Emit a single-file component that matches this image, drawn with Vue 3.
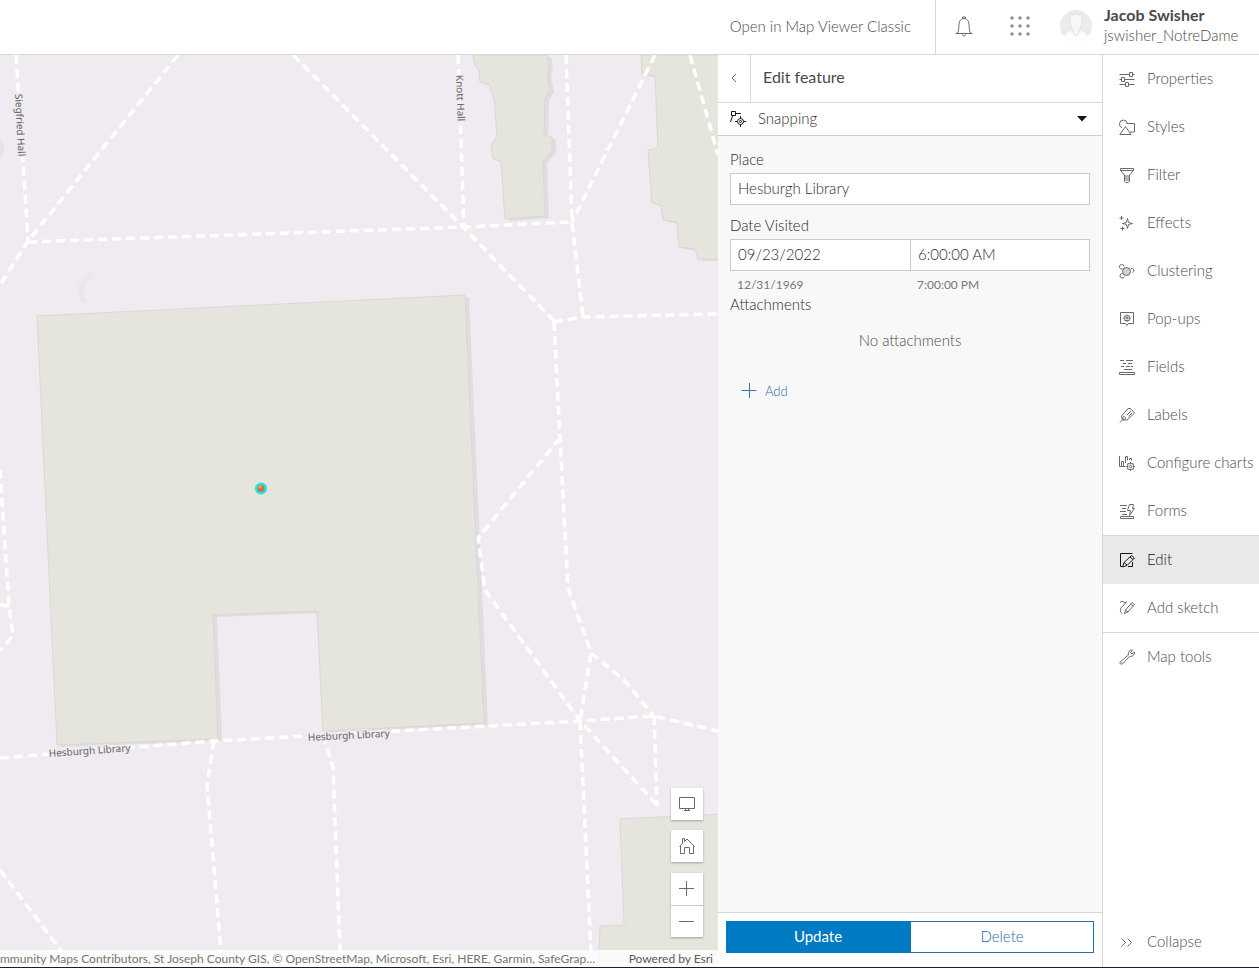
<script setup>
import { ref } from 'vue'

const place = ref('Hesburgh Library')
const date = ref('09/23/2022')
const time = ref('6:00:00 AM')

const icons = {
  properties:
    'M.5 3.500h10M13.500 3.500h2M10.500 1.500h3v4h-3zM.5 8.500h2M5.500 8.500h10M2.500 6.500h3v4h-3zM.5 13.500h6M9.500 13.500h6M6.500 11.500h3v4h-3z',
  styles: 'M6.500 7.500 12 15.500H.8zM3 8.800A4 4 0 1 1 8.400 4.500M7.500 4.500h8v8.500h-4.500',
  filter: 'M1.500 1.500h13v2l-4 4.500v6.500l-1 1h-3l-1-1V8l-4-4.500zM1.500 3.500h13M7 8v6M9 8v6',
  effects: 'M8.500 3.500 9.500 7.500 13.500 8.500 9.500 9.500 8.500 13.500 7.500 9.500 3.500 8.500 7.500 7.500zM2.500 1v4M.5 3h4M3.500 11.500v4M1.500 13.500h4',
  clustering: 'M3.500 6A2.300 2.300 0 1 1 5 3.500M12 5.500A2 2 0 1 1 13.500 9.500M3.500 10.500A2.300 2.300 0 1 0 5.500 13.500',
  popups:
    'M1.500 1.500h13v11h-5l-1.500 2-1.500-2h-5zM8 3.500v1.500M8 9.500V11M4 7.200h1.500M10.500 7.200H12M5.700 4.900h4.600v4.600H5.700zM8 6.300a.9.9 0 1 0 .1 0',
  fields: 'M1 1.500h4M7 1.500h7M4 4.500h3M9 4.500h4M2 7.500h3M7 7.500h4M5 10.500h8M12 7.500h2M.5 13.500h15v2H.5z',
  labels: 'M2.500 9 9 1.500 11.500 1.500 15.500 6 8 13H3.500zM1 15.500 4.500 11.500M5 9.500a1.500 1.500 0 1 0 .1 0M8 8l4-4M9.500 9.500 13 6',
  charts:
    'M.5 1v10.500h6M2.500 6.500h2v5h-2zM6.500 8V1.500h2v4M10.500 5V3.500h2v2M11.500 7v1.500M11.500 14.500V16M7 11.500h1.500M14.500 11.500H16M8.700 8.700h5.600v5.600H8.700zM11.500 10.300a1.200 1.200 0 1 0 .1 0',
  forms: 'M1 2.500h7M3 5.500h4M1 8.500h6M3 11.500h5M1.500 13.500h13v2h-13zM10.500 1.500h4l-1 4h2l-5 7 1-5h-3z',
  edit: 'M13.500 1.500H1.500v13h2M13.500 10v4.500H9M3.500 15 5 10.500 12.500 3.500 15.500 6 8 13.500zM5 10.500 8 13M11 5l3 2.500',
  sketch: 'M1 2.500 3 1l2 1.500L7.500 2 4 6C2 7 1 9 1.500 11.500L3 13.500M5.500 13.500 6.500 10 13 2.500 15.500 4.500 9 12zM6.500 10 9 12M11.500 4l2.500 2',
  tools: 'M1.500 12.500 9.500 6C8.500 3 11 .5 13.500 1L11.500 3.500 13 5 15.500 3C16 6 13 8 10.500 7.500L4 14.500C2 16 0 14.500 1.500 12.500zM2.500 13.500h1',
}

const layerItems = [
  ['properties', 'Properties'],
  ['styles', 'Styles'],
  ['filter', 'Filter'],
  ['effects', 'Effects'],
  ['clustering', 'Clustering'],
  ['popups', 'Pop-ups'],
  ['fields', 'Fields'],
  ['labels', 'Labels'],
  ['charts', 'Configure charts'],
  ['forms', 'Forms'],
]
const editItems = [
  ['edit', 'Edit'],
  ['sketch', 'Add sketch'],
]
const toolItems = [['tools', 'Map tools']]
const groups = [layerItems, editItems, toolItems]

const paths = [
  'M16 55 28 240',
  'M178 55 28 241 0 285',
  'M28 242 464 227 572 222',
  'M293 55 464 228 554 321',
  'M458 55 464 227',
  'M566 55 572 222 583 317',
  'M655 55 572 222',
  'M690 55 718 155',
  'M554 322 583 317 718 314',
  'M554 322 560 438 568 588 591 653 580 721',
  'M560 438 478 538 485 590 580 721 658 806',
  'M591 653 624 680 654 716',
  'M654 716 657 806',
  'M0 758 213 741 580 721 654 716 718 731',
  'M580 721 591 952',
  'M214 741 207 785 221 952',
  'M323 735 333 767 340 952',
  'M0 870 62 952',
  'M0 470 9 606 13 635 0 651',
  'M0 605 9 606',
]
const buildings = [
  'M37 316 465 295 484 723 323 731 317 611 213 615 218 739 57 745z',
  'M473 55 475 66 479 70 480 82 489 84 494 99 497 136 491 145 493 159 501 161 505 219 545 216 543 161 552 151 552 137 544 135 545 98 550 90 547 75 549 65 547 55z',
  'M641 55 642 74 655 76 658 148 648 150 652 203 661 205 663 220 677 222 679 247 695 249 698 259 725 259 725 55z',
  'M620 819 725 814 725 960 599 960 600 926 624 925z',
]
</script>

<template>
  <div class="app">
    <header class="top">
      <a class="classic" href="#">Open in Map Viewer Classic</a>
      <div class="account">
        <button class="plain" aria-label="Notifications">
          <svg width="20" height="24" viewBox="0 0 20 24" class="line">
            <path d="M1.500 19.500h17M3 19.500c2-2 1.500-5 2-9C5.500 6.500 7 4.500 10 4.500s4.500 2 5 6c.5 4 0 7 2 9M8.500 4.500v-1.500h3v1.500M8.500 20.500a1.500 1.500 0 0 0 3 0" />
          </svg>
        </button>
        <button class="plain" aria-label="Apps">
          <svg width="20" height="20" viewBox="0 0 20 20" class="line">
            <template v-for="y in 3" :key="y">
              <circle v-for="x in 3" :key="x" :cx="x * 8 - 6" :cy="y * 8 - 6" r="1.200" />
            </template>
          </svg>
        </button>
        <button class="user">
          <svg width="32" height="32" viewBox="0 0 32 32">
            <circle cx="16" cy="16" r="16" fill="#ebebeb" />
            <path d="M4 27c1-3 4-5 8-6l4 5 4-5c4 1 7 3 8 6-3 3-7 5-12 5S7 30 4 27z" fill="#fdfdfd" />
            <path d="M10 9c1-7 11-7 12 0 0 5-1 8-3 11v3l-3 3-3-3v-3c-2-3-3-6-3-11z" fill="#f7f7f7" stroke="#e2e2e2" />
          </svg>
          <span class="names"><strong>Jacob Swisher</strong><span>jswisher_NotreDame</span></span>
        </button>
      </div>
    </header>

    <main class="body">
      <section class="map" aria-label="Map">
        <svg class="canvas" viewBox="0 55 718 912" preserveAspectRatio="xMinYMin slice">
          <g fill="none" stroke="#e6e2e9" stroke-linecap="round">
            <path d="M90 275Q76 286 84 300" stroke-width="6" opacity=".6" />
            <ellipse cx="0" cy="149" rx="2" ry="6" stroke-width="4" />
          </g>
          <g fill="#e0dce0" transform="translate(4 2)"><path v-for="b in buildings" :key="b" :d="b" /></g>
          <g fill="#e5e4dd" stroke="#dad8d5"><path v-for="b in buildings" :key="b" :d="b" /></g>
          <g class="walks"><path v-for="p in paths" :key="p" :d="p" /></g>
          <g class="names-on-map">
            <text transform="translate(15 94) rotate(87)">Siegfried Hall</text>
            <text transform="translate(456 75) rotate(88)">Knott Hall</text>
            <text transform="translate(49 757) rotate(-4)">Hesburgh Library</text>
            <text transform="translate(308 741) rotate(-3)">Hesburgh Library</text>
          </g>
          <circle cx="261" cy="488.500" r="4.800" fill="#d9713a" stroke="#1fe5e5" stroke-width="2.500" />
          <circle cx="260" cy="487" r="1.500" fill="#f5a878" />
        </svg>
        <div class="controls">
          <button aria-label="Full view">
            <svg width="16" height="16" viewBox="0 0 16 16" class="line"><path d="M.5 1.500h15v11H.5zM6.500 12.500v2M9.500 12.500v2M5 14.500h6" /></svg>
          </button>
          <button aria-label="Default map view">
            <svg width="16" height="16" viewBox="0 0 16 16" class="line"><path d="M.5 8.500 3.500 5.500V.5h2v3L8 1l7.500 7.500M1.500 8v7.500h4v-6h5v6h4V8" /></svg>
          </button>
          <div class="zoom">
            <button aria-label="Zoom in">
              <svg width="16" height="16" viewBox="0 0 16 16" class="line"><path d="M0 7.500h15M7.500 0v15" /></svg>
            </button>
            <button aria-label="Zoom out">
              <svg width="16" height="16" viewBox="0 0 16 16" class="line"><path d="M0 7.500h15" /></svg>
            </button>
          </div>
        </div>
        <div class="credits">
          <span>mmunity Maps Contributors, St Joseph County GIS, © OpenStreetMap, Microsoft, Esri, HERE, Garmin, SafeGrap…</span>
          <span>Powered by Esri</span>
        </div>
      </section>

      <section class="panel">
        <div class="panel-head">
          <button class="back" aria-label="Back">
            <svg width="8" height="10" viewBox="0 0 8 10" class="line"><path d="M6 1 2 5l4 4" /></svg>
          </button>
          <h2>Edit feature</h2>
        </div>
        <button class="snap">
          <svg width="16" height="16" viewBox="0 0 16 16" fill="none" stroke="#151515">
            <path d="M1.500.5h4v4h-4zM6 2.500h5M2.500 5 .5 11M10.500 5v2.500M10.500 13.500v2.500M5 10.500h2.500M13.500 10.500h2.500" />
            <circle cx="10.500" cy="10.500" r="3" />
            <circle cx="10.500" cy="10.500" r="1" />
          </svg>
          <span class="text">Snapping</span>
          <svg width="10" height="6" viewBox="0 0 10 6"><path d="M0 0h10L5 5.500z" fill="#151515" /></svg>
        </button>
        <form class="fields" @submit.prevent>
          <label for="place">Place</label>
          <input id="place" v-model="place" type="text" />
          <label for="date">Date Visited</label>
          <div class="pair">
            <input id="date" v-model="date" type="text" />
            <input v-model="time" type="text" aria-label="Time visited" />
          </div>
          <div class="pair hint"><span>12/31/1969</span><span>7:00:00 PM</span></div>
          <h3>Attachments</h3>
          <p>No attachments</p>
          <button class="add" type="button">
            <svg width="16" height="16" viewBox="0 0 16 16" fill="none" stroke="#3a79ae"><path d="M.5 7.500h15M8.500 0v15" /></svg>
            Add
          </button>
        </form>
        <div class="actions">
          <button class="update">Update</button>
          <button class="delete">Delete</button>
        </div>
      </section>

      <nav class="side" aria-label="Settings">
        <ul v-for="(group, g) in groups" :key="g">
          <li v-for="[icon, label] in group" :key="icon">
            <button :class="{ on: icon === 'edit' }">
              <svg width="16" height="16" viewBox="0 0 16 16" class="line">
                <circle v-if="icon === 'clustering'" cx="7.500" cy="8.500" r="4" fill="#d0d0d0" />
                <path :d="icons[icon]" />
              </svg>
              <span class="text">{{ label }}</span>
            </button>
          </li>
        </ul>
        <button class="collapse">
          <svg width="16" height="16" viewBox="0 0 16 16" class="line"><path d="M2.500 4.500l4 4-4 4M8.500 4.500l4 4-4 4" /></svg>
          <span class="text">Collapse</span>
        </button>
      </nav>
    </main>
  </div>
</template>

<style>
body {
  margin: 0;
}
</style>

<style scoped>
.app {
  display: flex;
  flex-direction: column;
  height: 100vh;
  box-sizing: border-box;
  border-bottom: 1px solid #14202b;
  background: #fff;
  color: #4c4c4c;
  font: 300 15px/20px Lato, "Open Sans", sans-serif;
}
button,
input {
  box-sizing: border-box;
  margin: 0;
  padding: 0;
  border: 0;
  border-radius: 0;
  background: none;
  color: inherit;
  font: inherit;
}
svg {
  flex: none;
}
.line {
  fill: none;
  stroke: #6a6a6a;
}
.text {
  padding-bottom: 2px;
}
.top {
  display: flex;
  justify-content: flex-end;
  flex: none;
  height: 54px;
  border-bottom: 1px solid #d8d8d8;
}
.classic {
  display: flex;
  align-items: center;
  padding: 0 24px 2px 0;
  color: inherit;
  text-decoration: none;
}
.account {
  display: flex;
  width: 324px;
  padding-bottom: 2px;
  box-sizing: border-box;
  border-left: 1px solid #d8d8d8;
}
.plain {
  display: flex;
  align-items: center;
  justify-content: center;
  width: 56px;
}
.user {
  display: flex;
  align-items: center;
  gap: 12px;
  margin-left: 12px;
  text-align: left;
}
.names {
  display: flex;
  flex-direction: column;
  padding-bottom: 3px;
  line-height: 21px;
}
.names strong {
  color: #4a4a4a;
  font-size: 16px;
  font-weight: 700;
}
.body {
  display: flex;
  flex: 1;
  min-height: 0;
}
.map {
  position: relative;
  display: flex;
  flex-direction: column;
  justify-content: flex-end;
  flex: 1;
  min-width: 0;
  overflow: hidden;
  background: #efebf1;
}
.canvas {
  position: absolute;
  inset: 0;
  width: 100%;
  height: 100%;
}
.walks {
  fill: none;
  stroke: #fffffb;
  stroke-width: 3.500;
  stroke-dasharray: 9 5;
}
.names-on-map {
  fill: #666;
  stroke: #efebf1;
  stroke-width: 3;
  paint-order: stroke;
  font: 10px "Noto Sans", sans-serif;
}
.controls {
  position: relative;
  display: flex;
  flex-direction: column;
  align-self: flex-end;
  gap: 10px;
  margin: 0 15px 13px;
}
.controls button {
  display: flex;
  align-items: center;
  justify-content: center;
  width: 32px;
  height: 32px;
  background: #fff;
}
.controls > * {
  box-shadow: 0 1px 2px rgba(0, 0, 0, 0.3);
}
.zoom {
  margin-top: 1px;
}
.zoom button + button {
  border-top: 1px solid #c8c8c8;
}
.credits {
  position: relative;
  display: flex;
  justify-content: space-between;
  gap: 12px;
  padding-right: 5px;
  background: rgba(255, 255, 255, 0.8);
  color: #757575;
  font-size: 12px;
  font-weight: 400;
  line-height: 17px;
  white-space: nowrap;
}
.credits span + span {
  color: #5a5a5a;
}
.panel {
  display: flex;
  flex-direction: column;
  flex: none;
  width: 384px;
  background: #f8f8f8;
}
.panel-head {
  display: flex;
  align-items: center;
  height: 47px;
  border-bottom: 1px solid #d8d8d8;
  background: #fff;
}
.back {
  display: flex;
  align-items: center;
  justify-content: center;
  align-self: stretch;
  width: 33px;
  padding-bottom: 2px;
  border-right: 1px solid #d8d8d8;
}
h2 {
  margin: 0 12px;
  padding-bottom: 3px;
  color: #4a4a4a;
  font-size: 16px;
  font-weight: 400;
}
.snap {
  display: flex;
  align-items: center;
  gap: 12px;
  height: 33px;
  padding: 0 15px 0 12px;
  border-bottom: 1px solid #d0d0d0;
  background: #fff;
  color: #2b2b2b;
  text-align: left;
}
.snap span {
  flex: 1;
}
.fields {
  display: flex;
  flex-direction: column;
  flex: 1;
  padding: 13px 12px;
  color: #2b2b2b;
}
label {
  margin-bottom: 4px;
}
input {
  width: 100%;
  height: 32px;
  padding: 0 7px 3px;
  border: 1px solid #cacaca;
  background: #fff;
}
#place {
  margin-bottom: 10px;
}
.pair {
  display: grid;
  grid-template-columns: 1fr 1fr;
}
#date {
  border-right: 0;
}
.hint {
  padding-top: 4px;
  color: #777;
  font-size: 12px;
  font-weight: 400;
  line-height: 19px;
}
.hint span {
  padding-left: 7px;
}
h3 {
  margin: 0;
  font-size: 15px;
  font-weight: 300;
}
.fields p {
  margin: 16px 0 31px;
  color: #4c4c4c;
  text-align: center;
}
.add {
  display: flex;
  align-items: center;
  align-self: flex-start;
  gap: 8px;
  margin-left: 11px;
  color: #1f68a5;
  font-size: 13px;
}
.actions {
  display: flex;
  padding: 8px 8px 14px;
  border-top: 1px solid #d8d8d8;
  background: #fff;
}
.actions button {
  flex: 1;
  height: 32px;
  padding-bottom: 2px;
  border: 1px solid #1b75ab;
}
.actions .update {
  border-color: #007ac2;
  background: #007ac2;
  color: #fff;
  font-weight: 400;
}
.actions .delete {
  color: #1f68a5;
}
.side {
  display: flex;
  flex-direction: column;
  flex: none;
  box-sizing: border-box;
  width: 157px;
  border-left: 1px solid #d8d8d8;
}
ul {
  margin: 0;
  padding: 0;
  list-style: none;
}
ul + ul {
  border-top: 1px solid #d8d8d8;
}
.side button {
  display: flex;
  align-items: center;
  gap: 12px;
  width: 100%;
  height: 48px;
  padding-left: 16px;
  white-space: nowrap;
}
.side .on {
  background: #e9e9e9;
  color: #151515;
}
.on .line {
  stroke: #151515;
}
.side .collapse {
  margin-top: auto;
  margin-bottom: 1px;
}
</style>
